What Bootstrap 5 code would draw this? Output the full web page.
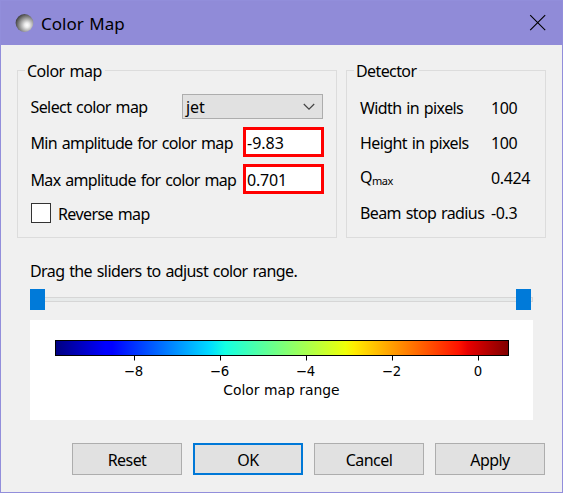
<!DOCTYPE html>
<html lang="en">
<head>
<meta charset="utf-8">
<title>Color Map</title>
<link rel="stylesheet" href="https://cdn.jsdelivr.net/npm/bootstrap@5.3.0/dist/css/bootstrap.min.css">
<style>
body{font:16px/20px "Noto Sans","Open Sans",sans-serif;color:#000;background:#f0f0f0;letter-spacing:-.6px;word-spacing:1.2px}
.win{width:563px;height:493px;border:1px solid #928edb;background:#f0f0f0}
.titlebar{height:44px;background:#908bd8;padding:0 15px 0 14px}
.titlebar .cap{font-size:17px;margin:1px 0 0 7px;letter-spacing:0}
.groups{padding:25px 16px 0;gap:9px}
.group{height:168px;border:1px solid #dcdcdc;border-radius:0}
.g1{width:320px;padding:0 13px}.g2{width:200px;padding:19px 13px 0}
.legend-text{position:absolute;top:-10px;left:7px;background:#f0f0f0;padding:0 3px 0 2px;white-space:nowrap}
.t-legend{letter-spacing:-.5px}
.t-min,.t-max{padding-top:2px;margin-left:-.5px;letter-spacing:-.65px}
.t-sel{margin-left:-.5px}
.t-rev{padding-top:2px}
.nw{white-space:nowrap}
.r-combo{height:25px;margin-top:23px}
.combo{width:141px;height:25px;border:1px solid #adadad;background:#e1e1e1;padding:0 7px 0 3px;letter-spacing:-.1px}
.r-min{height:30px;margin-top:8px}.r-max{height:30px;margin-top:7px}
.field{width:81px;height:30px;border:3px solid #f00;background:#fff;padding:2px 0 0 1px;border-radius:0;margin-right:-1px;color:#000;outline:0;font:inherit;letter-spacing:0}
.r-max .field{letter-spacing:-.2px}
.r-check{height:20px;margin-top:9px}
.tick-box{width:20px;height:20px;border:1px solid #333;background:#fff;margin-right:7px}
.d-row{height:35px}
.d-row>span:first-child{width:131px}
.d-row>span:last-child{letter-spacing:-.35px}
.q-sub{font-size:11px;letter-spacing:-.4px;position:relative;top:2px}
.range-area{padding:23px 29px 0}
.slider{height:21px;margin-top:8px}
.groove{height:5px;border:1px solid #d6d6d6;background:#e7eaea;left:0;right:0;top:8px}
.handle{width:15px;height:21px;background:#007ad9;top:0}
.plot{height:100px;margin-top:10px;background:#fff;letter-spacing:0;word-spacing:0}
.actions{padding:23px 17px 0;gap:11px}
.actions .btn{width:110px;height:32px;border:1px solid #adadad;border-radius:0;background:#e1e1e1;color:#000;font-size:16px;line-height:20px;padding:2px 0 0;letter-spacing:-.55px}
.actions .btn.main{border:2px solid #0078d7;padding-top:1px}
</style>
</head>
<body class="overflow-hidden">
<div class="win">
  <header class="titlebar d-flex align-items-center">
    <svg width="19" height="19" viewBox="0 0 19 19"><defs><radialGradient id="ball" cx=".64" cy=".62" r=".66"><stop offset="0" stop-color="#fff"/><stop offset=".2" stop-color="#ececec"/><stop offset=".6" stop-color="#999"/><stop offset="1" stop-color="#424242"/></radialGradient></defs><circle cx="9.500" cy="9" r="8.900" fill="url(#ball)"/></svg>
    <span class="cap">Color Map</span>
    <svg class="ms-auto" width="18" height="18" viewBox="0 0 18 18" stroke="#000" stroke-width="1.1"><path d="M1.200 1.200 16.200 16.200M16.200 1.200 1.200 16.200"/></svg>
  </header>
  <div class="groups d-flex">
    <section class="group g1 position-relative">
      <span class="legend-text t-legend">Color map</span>
      <div class="r-combo d-flex align-items-center justify-content-between"><span class="t-sel">Select color map</span>
        <div class="combo d-flex align-items-center justify-content-between"><span>jet</span><svg width="12" height="8" fill="none" stroke="#444" stroke-width="1.2"><path d="M.8 1 6 6.200 11.200 1"/></svg></div></div>
      <div class="r-min d-flex align-items-center justify-content-between"><span class="t-min nw">Min amplitude for color map</span><input class="field" value="-9.83" aria-label="Minimum amplitude"></div>
      <div class="r-max d-flex align-items-center justify-content-between"><span class="t-max nw">Max amplitude for color map</span><input class="field" value="0.701" aria-label="Maximum amplitude"></div>
      <div class="r-check d-flex align-items-center"><span class="tick-box"></span><span class="t-rev">Reverse map</span></div>
    </section>
    <section class="group g2 position-relative">
      <span class="legend-text">Detector</span>
      <div class="d-row d-flex align-items-center nw"><span>Width in pixels</span><span>100</span></div>
      <div class="d-row d-flex align-items-center nw"><span>Height in pixels</span><span>100</span></div>
      <div class="d-row d-flex align-items-center nw"><span>Q<span class="q-sub">max</span></span><span>0.424</span></div>
      <div class="d-row d-flex align-items-center nw"><span>Beam stop radius</span><span>-0.3</span></div>
    </section>
  </div>
  <section class="range-area">
    <div class="nw">Drag the sliders to adjust color range.</div>
    <div class="slider position-relative"><div class="groove position-absolute"></div><div class="handle position-absolute start-0"></div><div class="handle position-absolute" style="left:486px"></div></div>
    <div class="plot"><svg class="d-block" width="503" height="100" font-family="DejaVu Sans, sans-serif" font-size="13.3" text-anchor="middle">
      <defs><linearGradient id="jet"><stop offset="0" stop-color="#000080"/><stop offset=".11" stop-color="#00f"/><stop offset=".125" stop-color="#00f"/><stop offset=".34" stop-color="#00dbff"/><stop offset=".375" stop-color="#14ffe2"/><stop offset=".64" stop-color="#eeff08"/><stop offset=".66" stop-color="#ffec00"/><stop offset=".89" stop-color="#ff1300"/><stop offset=".91" stop-color="#e80000"/><stop offset="1" stop-color="#800000"/></linearGradient></defs>
      <rect x="25.5" y="20.5" width="453" height="15" fill="url(#jet)" stroke="#000"/>
      <path d="M104.5 36v4.5M190.5 36v4.5M276.5 36v4.5M362.5 36v4.5M448.5 36v4.5" stroke="#000"/>
      <text x="103.500" y="56">−8</text><text x="189.500" y="56">−6</text><text x="275.500" y="56">−4</text><text x="361.500" y="56">−2</text><text x="448" y="56">0</text>
      <text x="251.500" y="75" font-size="13.900">Color map range</text></svg></div>
  </section>
  <footer class="actions d-flex justify-content-end">
    <button class="btn">Reset</button><button class="btn main">OK</button><button class="btn">Cancel</button><button class="btn">Apply</button>
  </footer>
</div>
<script src="https://cdn.jsdelivr.net/npm/bootstrap@5.3.0/dist/js/bootstrap.bundle.min.js"></script>
</body>
</html>
